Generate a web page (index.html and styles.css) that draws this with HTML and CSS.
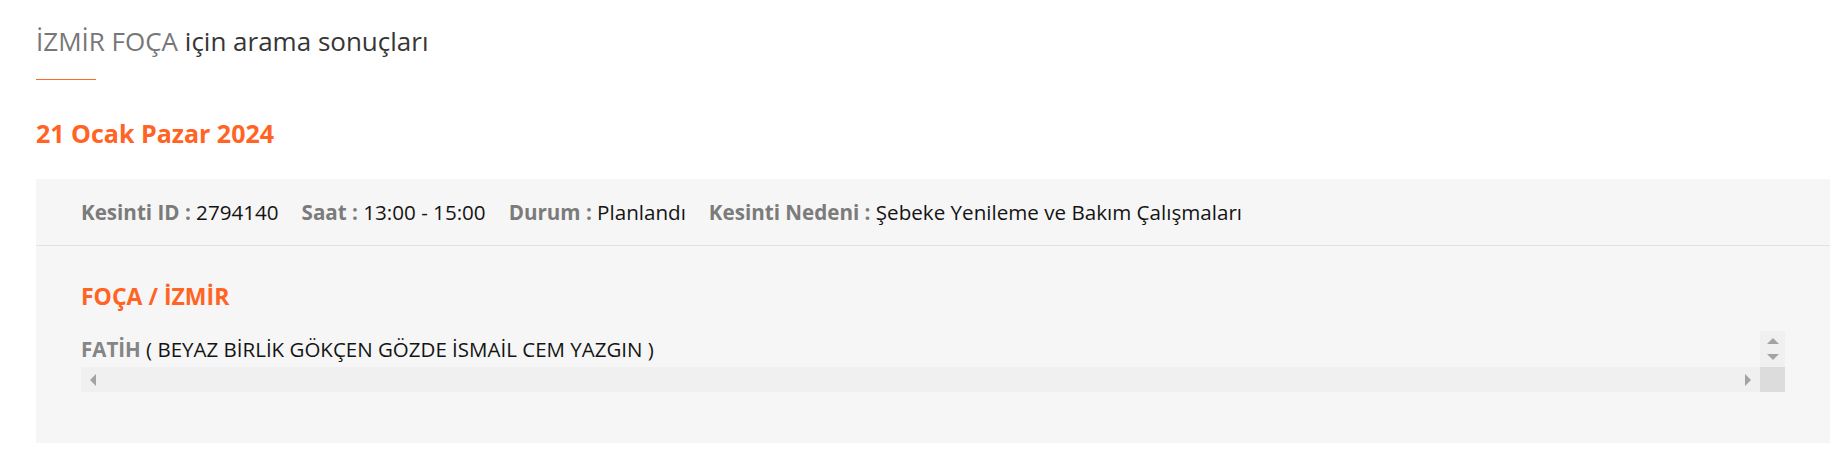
FILE: index.html
```html
<!DOCTYPE html>
<html lang="tr">
<head>
<meta charset="utf-8">
<title>İZMİR FOÇA için arama sonuçları</title>
<link rel="stylesheet" href="styles.css">
</head>
<body>
<div class="page">
  <h1 class="title"><span class="place">İZMİR FOÇA</span> için arama sonuçları</h1>
  <div class="rule"></div>
  <h2 class="date">21 Ocak Pazar 2024</h2>
  <div class="card">
    <div class="card-head">
      <span class="item"><b>Kesinti ID :</b> 2794140</span>
      <span class="item"><b>Saat :</b> 13:00 - 15:00</span>
      <span class="item"><b>Durum :</b> Planlandı</span>
      <span class="item"><b>Kesinti Nedeni :</b> Şebeke Yenileme ve Bakım Çalışmaları</span>
    </div>
    <div class="card-body">
      <h3 class="district">FOÇA / İZMİR</h3>
      <div class="scroller">
        <div class="scroll-content"><b>FATİH</b> ( BEYAZ BİRLİK GÖKÇEN GÖZDE İSMAİL CEM YAZGIN )</div>
        <div class="vbar"><span class="arr up"></span><span class="arr down"></span></div>
        <div class="hbar"><span class="arr left"></span><span class="arr right"></span></div>
        <div class="corner"></div>
      </div>
    </div>
  </div>
</div>
</body>
</html>
```

FILE: styles.css
```css
* { box-sizing: border-box; }
html, body { margin: 0; padding: 0; background: #fff; }
body { font-family: "Open Sans", "Noto Sans", sans-serif; color: #1c1c1c; }

.page { padding: 23px 9px 0 36px; }

.title {
  margin: 0;
  font-size: 26px;
  line-height: 36px;
  font-weight: 400;
  color: #363636;
}
.title .place { color: #777; }

.rule {
  width: 60px;
  height: 1px;
  margin-top: 20px;
  background: #ff6a2b;
}

.date {
  margin: 36px 0 0;
  font-size: 25px;
  line-height: 34px;
  font-weight: 700;
  color: #ff6424;
}

.card {
  margin-top: 29px;
  background: #f6f6f6;
}

.card-head {
  height: 67px;
  padding: 0 45px;
  border-bottom: 1px solid #e2e2e2;
  display: flex;
  align-items: center;
  gap: 23px;
  font-size: 20.6px;
  line-height: 29px;
  color: #141414;
}
.card-head b { font-weight: 700; color: #7b7b7b; }

.card-body { padding: 34px 45px 51px; }

.district {
  margin: 0;
  font-size: 23px;
  line-height: 32px;
  font-weight: 700;
  color: #ff6424;
}

.scroller {
  margin-top: 19px;
  display: grid;
  grid-template-columns: 1fr 25px;
  grid-template-rows: 36px 25px;
}
.scroll-content {
  font-size: 20.5px;
  line-height: 36px;
  color: #141414;
  white-space: nowrap;
}
.scroll-content b { font-weight: 700; color: #858585; }

.vbar {
  background: #f0f0f0;
  display: flex;
  flex-direction: column;
  align-items: center;
  padding-top: 7px;
  gap: 10px;
}
.hbar {
  background: #f0f0f0;
  display: flex;
  align-items: center;
  justify-content: space-between;
  padding: 0 9px 0 9px;
}
.corner { background: #dcdcdc; }

.arr { display: block; width: 0; height: 0; }
.arr.up { border-left: 6px solid transparent; border-right: 6px solid transparent; border-bottom: 6px solid #a3a3a3; }
.arr.down { border-left: 6px solid transparent; border-right: 6px solid transparent; border-top: 6px solid #a3a3a3; }
.arr.left { border-top: 6px solid transparent; border-bottom: 6px solid transparent; border-right: 6px solid #a3a3a3; }
.arr.right { border-top: 6px solid transparent; border-bottom: 6px solid transparent; border-left: 6px solid #a3a3a3; }
```
